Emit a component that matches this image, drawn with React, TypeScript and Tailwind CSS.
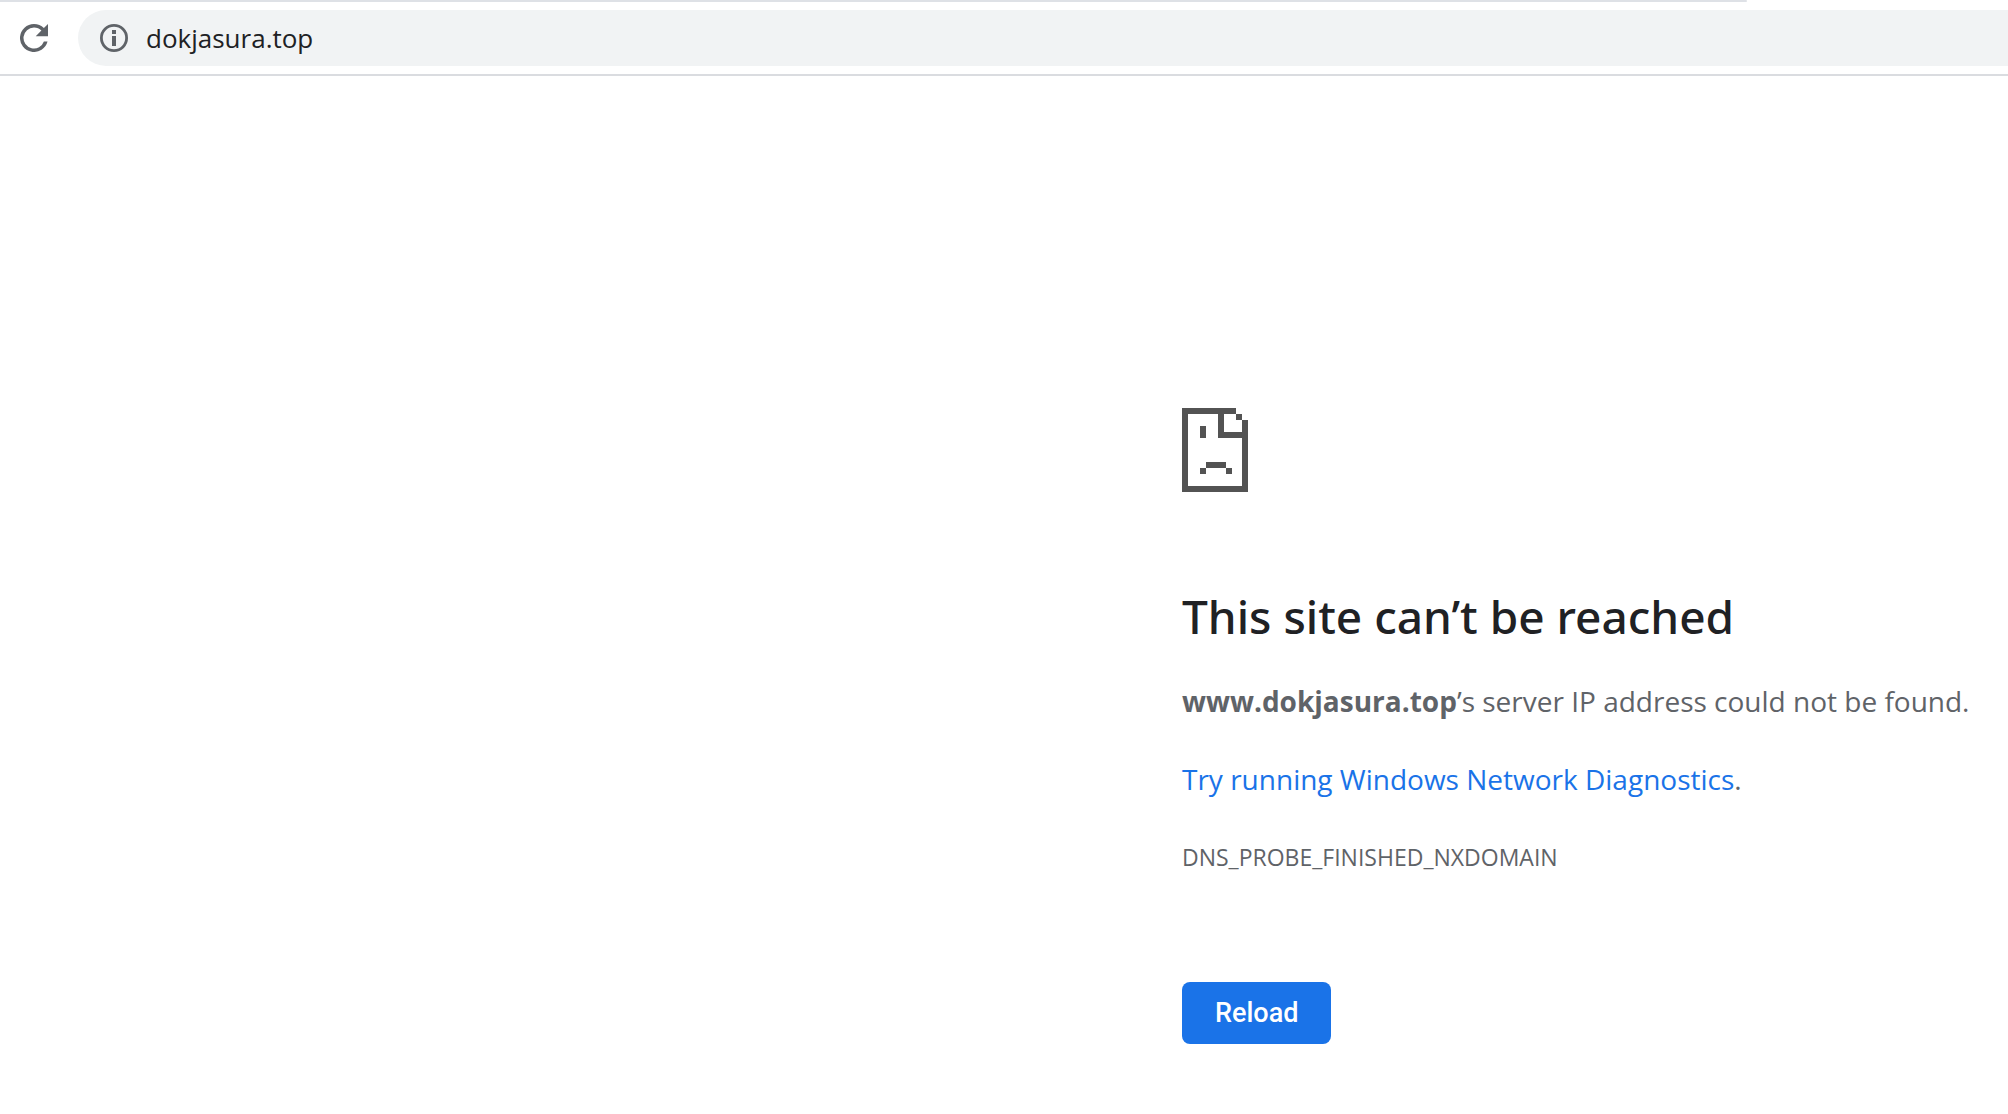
const sans = "font-['Open_Sans','Noto_Sans',sans-serif]";

function ReloadIcon() {
  return (
    <svg viewBox="4 4 16 16" className="size-7" fill="#5f6368" aria-hidden="true">
      <path d="M17.65 6.35A7.96 7.96 0 0 0 12 4a8 8 0 1 0 7.73 10h-2.08A6 6 0 1 1 12 6c1.66 0 3.14.69 4.22 1.78L13 11h7V4z" />
    </svg>
  );
}

function InfoIcon() {
  return (
    <svg viewBox="0 0 28 28" className="size-7" aria-hidden="true">
      <circle cx="14" cy="14" r="12.6" fill="none" stroke="#5f6368" strokeWidth="2.8" />
      <path d="M12 6h4v4h-4zM12 12h4v10h-4z" fill="#5f6368" />
    </svg>
  );
}

function SadPageIcon() {
  return (
    <svg viewBox="0 0 66 84" width="66" height="84" fill="#535353" shapeRendering="crispEdges" aria-hidden="true">
      <path d="M0 0h54v6H42v18h18V12h6v72H0zM6 6v72h54V30H36V6z" fillRule="evenodd" />
      <path d="M54 6h6v6h-6zM18 18h6v12h-6zM24 54h20v6H24zM18 60h6v6h-6zM44 60h6v6h-6z" />
    </svg>
  );
}

export default function App() {
  return (
    <div className={`min-h-screen overflow-x-hidden bg-white text-[#5f6368] ${sans}`}>
      <header className="border-b-2 border-[#dadce0]">
        <div className="h-0.5 w-[87%] rounded-r-full bg-[#dee1e6]" />
        <div className="flex items-center gap-[30px] py-2 pl-5">
          <button type="button" aria-label="Reload this page">
            <ReloadIcon />
          </button>
          <div className="flex h-14 flex-1 items-center gap-[18px] rounded-l-full bg-[#f1f3f4] pl-[22px]">
            <button type="button" aria-label="View site information">
              <InfoIcon />
            </button>
            <input
              type="text"
              aria-label="Address"
              defaultValue="dokjasura.top"
              className="min-w-0 flex-1 bg-transparent text-[26px] text-[#202124] outline-none"
            />
          </div>
        </div>
      </header>
      <div className="grid grid-cols-[1182fr_826fr]">
        <main className="col-start-2 min-w-0 pt-[332px] whitespace-nowrap">
          <SadPageIcon />
          <h1 className="mt-[94px] font-['Noto_Sans',sans-serif] text-[46px] leading-[60px] font-medium text-[#202124]">This site can’t be reached</h1>
          <p className="mt-[35px] text-[28px] leading-10">
            <strong className="font-bold">www.dokjasura.top</strong>’s server IP address could not be found.
          </p>
          <p className="mt-[38px] text-[28px] leading-10">
            <a href="#diagnostics" className="text-[#1a73e8]">Try running Windows Network Diagnostics</a>.
          </p>
          <p className="mt-[38px] text-[23px] leading-10">DNS_PROBE_FINISHED_NXDOMAIN</p>
          <button
            type="button"
            className="mt-[105px] block rounded-lg bg-[#1a73e8] px-[33px] py-[13px] font-['Roboto',sans-serif] text-[27px] leading-9 font-medium text-white"
          >
            Reload
          </button>
        </main>
      </div>
    </div>
  );
}
